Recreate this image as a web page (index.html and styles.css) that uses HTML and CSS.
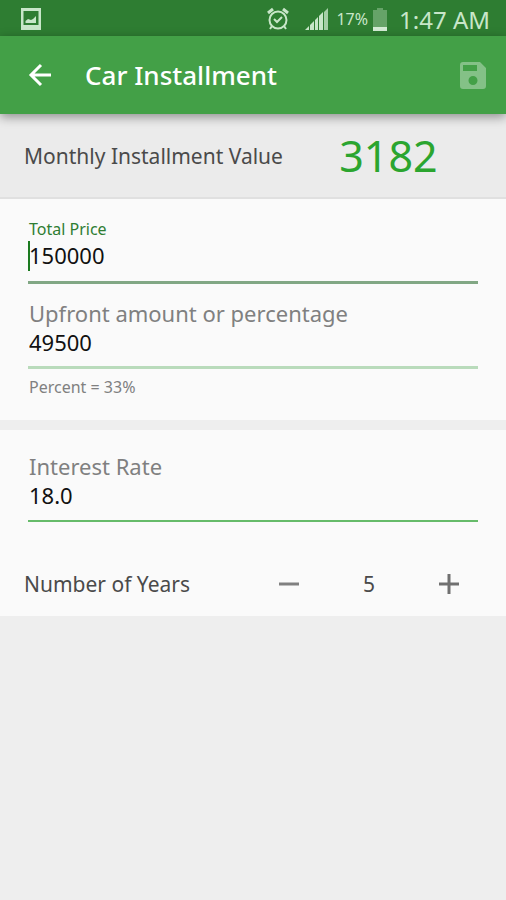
FILE: index.html
```html
<!DOCTYPE html>
<html lang="en">

<head>
    <meta charset="UTF-8">
    <meta name="viewport" content="width=device-width, initial-scale=1.0">
    <title>Car Installment</title>
    <link rel="stylesheet" href="styles.css">
</head>

<body>
    <div class="status-bar">
        <svg class="icon-picture" width="20" height="22" viewBox="0 0 20 22">
            <path fill="#c8e6c9" fill-rule="evenodd" d="M0 0h20v22H0zM2.500 3v14h15V3z" />
            <path fill="#c8e6c9" d="M4.500 15v-2l2.500-2 3 1 2-1 3-3v7z" />
        </svg>
        <svg class="icon-alarm" width="22" height="24" viewBox="0 0 22 24" fill="none" stroke="#c8e6c9">
            <circle cx="11" cy="13" r="8.500" stroke-width="2" />
            <path stroke-width="3" d="M1 6l5-4M21 6l-5-4" />
            <path stroke-width="2" d="M7 12l3 3 5-5M5 19l-2 3M17 19l2 3" />
        </svg>
        <svg class="icon-signal" width="23" height="23" viewBox="0 0 23 23">
            <path fill="#c8e6c9" d="M0 22l4-4v4zM5 17l4-4v9H5zM10 12l3-3v13h-3zM14 8l4-4v18h-4z" />
            <path fill="#a5cfa7" d="M19 4l4-4v22h-4z" />
        </svg>
        <span class="battery-text">17%</span>
        <svg class="icon-battery" width="14" height="23" viewBox="0 0 14 23">
            <path fill="#66a368" d="M4 0h6v2h4v17H0V2h4z" />
            <path fill="#d5ecd6" d="M0 19h14v4H0z" />
        </svg>
        <span class="clock">1:47 AM</span>
    </div>

    <header class="app-bar">
        <button class="icon-button" type="button" aria-label="Back">
            <svg width="24" height="24" viewBox="0 0 24 24" fill="none" stroke="#fff" stroke-width="3">
                <path d="M23 12H3M13 2L3 12l10 10" />
            </svg>
        </button>
        <h1>Car Installment</h1>
        <button class="icon-button" type="button" aria-label="Save" disabled>
            <svg width="26" height="27" viewBox="0 0 26 27">
                <path fill="#84c187" fill-rule="evenodd" d="M3 0h17l6 6v18a3 3 0 0 1-3 3H3a3 3 0 0 1-3-3V3a3 3 0 0 1 3-3zM3 3v6h14V3zM13 14a4.500 4.500 0 1 0 0 9 4.500 4.500 0 0 0 0-9z" />
            </svg>
        </button>
    </header>

    <main>
        <section class="summary">
            <span>Monthly Installment Value</span>
            <output class="summary-value">3182</output>
        </section>

        <section class="card">
            <div class="field field-focused">
                <label for="totalPrice">Total Price</label>
                <input type="text" id="totalPrice" value="150000">
            </div>
            <div class="field field-light">
                <label for="upfront">Upfront amount or percentage</label>
                <input type="text" id="upfront" value="49500">
            </div>
            <p class="hint">Percent = 33%</p>
        </section>

        <section class="card">
            <div class="field">
                <label for="rate">Interest Rate</label>
                <input type="text" id="rate" value="18.0">
            </div>
            <div class="years">
                <span class="years-label">Number of Years</span>
                <div class="stepper">
                    <button type="button" aria-label="Fewer years">
                        <svg width="20" height="20" viewBox="0 0 20 20" stroke="#808080" stroke-width="3">
                            <path d="M0 10h20" />
                        </svg>
                    </button>
                    <output>5</output>
                    <button type="button" aria-label="More years">
                        <svg width="20" height="20" viewBox="0 0 20 20" stroke="#707070" stroke-width="3">
                            <path d="M0 10h20M10 0v20" />
                        </svg>
                    </button>
                </div>
            </div>
        </section>
    </main>
</body>

</html>
```

FILE: styles.css
```css
* {
    box-sizing: border-box;
}

body {
    margin: 0;
    font-family: "Noto Sans", sans-serif;
    font-size: 21px;
    color: #4a4a4a;
    background-color: #eee;
}

svg {
    display: block;
}

button {
    display: flex;
    align-items: center;
    justify-content: center;
    padding: 0;
    border: none;
    background: none;
}

/* Status bar */
.status-bar {
    display: flex;
    align-items: center;
    height: 36px;
    padding: 2px 16px 0 21px;
    background-color: #2e7d32;
    color: #c8e6c9;
}

.icon-alarm {
    margin-left: auto;
}

.icon-signal {
    margin-left: 16px;
}

.battery-text {
    margin-left: 8px;
    font-size: 16px;
}

.icon-battery {
    margin-left: 5px;
}

.clock {
    margin-left: 12px;
    font-size: 24px;
}

/* App bar */
.app-bar {
    position: relative;
    display: flex;
    align-items: center;
    height: 78px;
    padding: 0 20px 0 28px;
    background-color: #43a047;
    box-shadow: 0 3px 10px rgba(0, 0, 0, 0.4);
}

.app-bar h1 {
    flex: 1;
    margin: 0 0 0 33px;
    font-size: 26px;
    font-weight: 500;
    color: #fff;
}

/* Result */
.summary {
    display: flex;
    align-items: center;
    height: 85px;
    padding: 0 24px;
    background-color: #ebebeb;
    border-bottom: 2px solid #e0e0e0;
}

.summary-value {
    flex: 1;
    padding-left: 12px;
    text-align: center;
    font-size: 43px;
    color: #2ba52f;
}

/* Form */
.card {
    padding: 18px 28px 21px;
    background-color: #fafafa;
}

.card + .card {
    margin-top: 10px;
    padding: 20px 28px 0;
}

.field {
    position: relative;
    display: flex;
    flex-direction: column;
}

.field label {
    padding-left: 1px;
    font-size: 22px;
    line-height: 32px;
    color: #808080;
}

.field input {
    width: 100%;
    height: 40px;
    padding: 0 0 12px 1px;
    border: none;
    border-bottom: 2px solid #66bb6a;
    outline: none;
    background: none;
    font-family: inherit;
    font-size: 22px;
    color: #111;
}

.field-focused label {
    font-size: 16px;
    line-height: 24px;
    color: #2e7d32;
}

.field-focused input {
    height: 43px;
    border-bottom: 3px solid #81a784;
}

/* Text cursor of the active field */
.field-focused::after {
    content: "";
    position: absolute;
    left: 0;
    top: 24px;
    width: 2px;
    height: 30px;
    background-color: #1b7a1f;
}

.field-light {
    margin-top: 13px;
}

.field-light input {
    border-bottom: 3px solid #b9dbbb;
}

.hint {
    margin: 6px 0 0;
    padding-left: 1px;
    font-size: 16px;
    line-height: 24px;
    color: #808080;
}

.years {
    display: flex;
    align-items: center;
    justify-content: space-between;
    height: 94px;
    margin: 0 -4px;
    padding-top: 30px;
}

.stepper {
    display: flex;
    align-items: center;
}

.stepper button {
    width: 66px;
    height: 64px;
}

.stepper output {
    width: 94px;
    text-align: center;
}
```
